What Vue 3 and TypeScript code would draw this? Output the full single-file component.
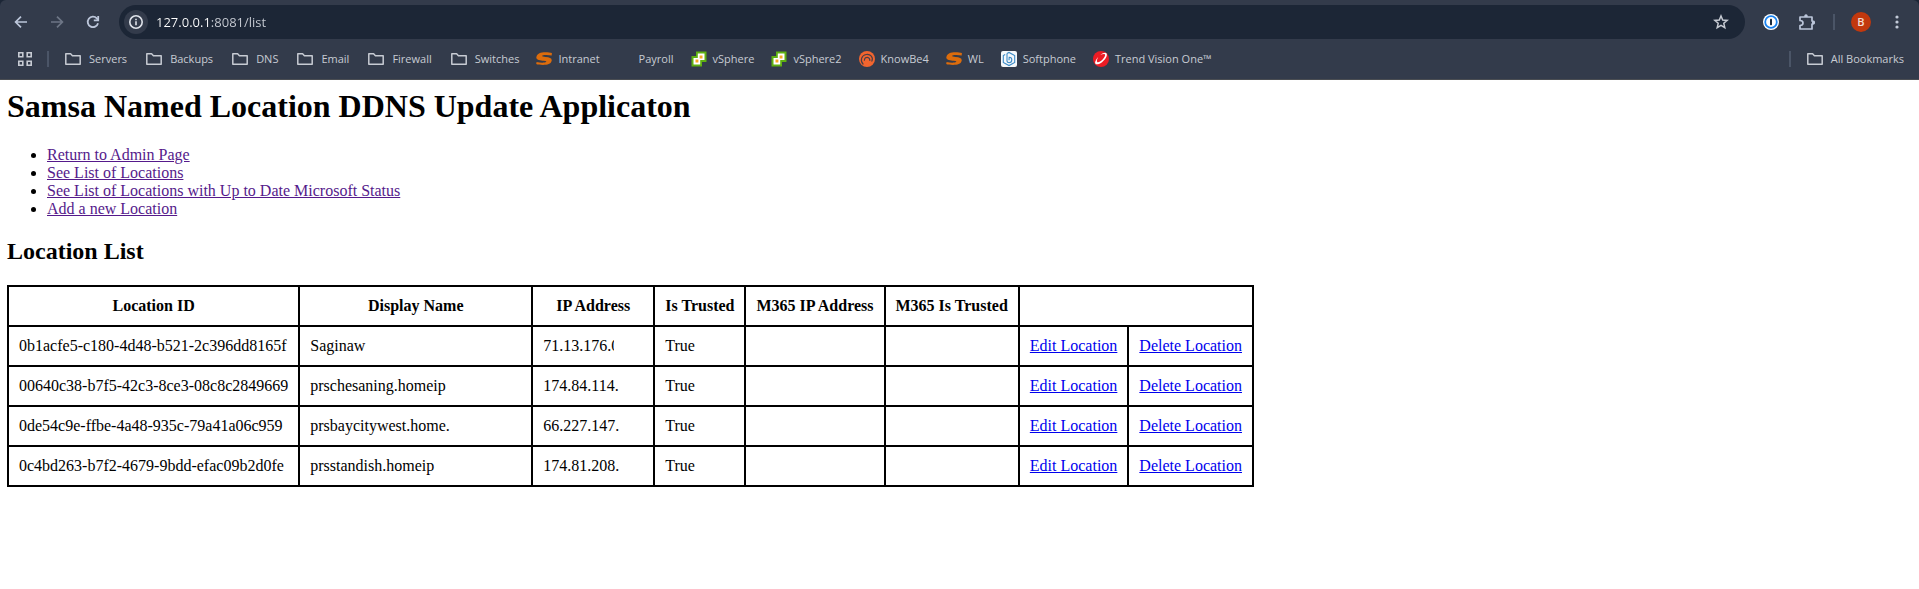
<script setup lang="ts">
import { ref } from 'vue'

type IconKind = 'folder' | 'swoosh' | 'none' | 'vsphere' | 'knowbe4' | 'softphone' | 'trend'

interface Bookmark {
  label: string
  icon: IconKind
}

interface NamedLocation {
  id: string
  displayName: string
  ipAddress: string
  isTrusted: string
}

const address = ref('127.0.0.1:8081/list')

const bookmarks: Bookmark[] = [
  { label: 'Servers', icon: 'folder' },
  { label: 'Backups', icon: 'folder' },
  { label: 'DNS', icon: 'folder' },
  { label: 'Email', icon: 'folder' },
  { label: 'Firewall', icon: 'folder' },
  { label: 'Switches', icon: 'folder' },
  { label: 'Intranet', icon: 'swoosh' },
  { label: 'Payroll', icon: 'none' },
  { label: 'vSphere', icon: 'vsphere' },
  { label: 'vSphere2', icon: 'vsphere' },
  { label: 'KnowBe4', icon: 'knowbe4' },
  { label: 'WL', icon: 'swoosh' },
  { label: 'Softphone', icon: 'softphone' },
  { label: 'Trend Vision One™', icon: 'trend' },
]

const navLinks: string[] = [
  'Return to Admin Page',
  'See List of Locations',
  'See List of Locations with Up to Date Microsoft Status',
  'Add a new Location',
]

const locations: NamedLocation[] = [
  { id: '0b1acfe5-c180-4d48-b521-2c396dd8165f', displayName: 'Saginaw', ipAddress: '71.13.176.0', isTrusted: 'True' },
  { id: '00640c38-b7f5-42c3-8ce3-08c8c2849669', displayName: 'prschesaning.homeip', ipAddress: '174.84.114.', isTrusted: 'True' },
  { id: '0de54c9e-ffbe-4a48-935c-79a41a06c959', displayName: 'prsbaycitywest.home.', ipAddress: '66.227.147.', isTrusted: 'True' },
  { id: '0c4bd263-b7f2-4679-9bdd-efac09b2d0fe', displayName: 'prsstandish.homeip', ipAddress: '174.81.208.', isTrusted: 'True' },
]
</script>

<template>
  <div class="window">
    <header class="chrome">
      <div class="toolbar">
        <button class="tool" type="button" aria-label="Back">
          <svg width="16" height="16" viewBox="0 0 16 16" fill="none" stroke="#bcc6da" stroke-width="1.7"><path d="M14 8H3M8 2.6L2.6 8L8 13.4" /></svg>
        </button>
        <button class="tool" type="button" aria-label="Forward" disabled>
          <svg width="16" height="16" viewBox="0 0 16 16" fill="none" stroke="#6e7686" stroke-width="1.7"><path d="M2 8H13M8 2.6L13.4 8L8 13.4" /></svg>
        </button>
        <button class="tool" type="button" aria-label="Reload">
          <svg width="16" height="16" viewBox="0 0 16 16" fill="none" stroke="#bcc6da" stroke-width="1.8"><path d="M13 9.2A5.2 5.2 0 1 1 11.8 4.4L13.2 6" /><path d="M13.2 2V6.3H8.8" /></svg>
        </button>
        <div class="omnibox">
          <button class="info" type="button" aria-label="View site information">
            <svg width="16" height="16" viewBox="0 0 16 16" fill="none" stroke="#dfe3ea" stroke-width="1.6"><circle cx="8" cy="8" r="6.2" /><path d="M8 7.2V11.3M8 4.7V6.2" /></svg>
          </button>
          <input v-model="address" class="address" type="text" aria-label="Address" />
          <button class="star" type="button" aria-label="Bookmark this page">
            <svg width="16" height="16" viewBox="0 0 16 16" fill="none" stroke="#c7cbd3" stroke-width="1.5"><path d="M8 2L9.7 6L14.2 6.4L10.8 9.3L11.8 13.6L8 11.3L4.2 13.6L5.2 9.3L1.8 6.4L6.3 6Z" /></svg>
          </button>
        </div>
        <button class="tool" type="button" aria-label="1Password">
          <svg width="16" height="16" viewBox="0 0 16 16"><circle cx="8" cy="8" r="8" fill="#fff" /><circle cx="8" cy="8" r="5.8" fill="#fff" stroke="#1a83f0" stroke-width="1.8" /><rect x="7" y="4.8" width="2" height="6.4" rx=".7" fill="#1b2a3c" /></svg>
        </button>
        <button class="tool" type="button" aria-label="Extensions">
          <svg width="18" height="18" viewBox="0 0 18 18"><path d="M2 4H14V8Q16.2 8 16.2 9.5Q16.2 11 14 11V16H2V12.5Q5 12.5 5 10Q5 7.5 2 7.5Z" fill="none" stroke="#bcc6da" stroke-width="1.7" stroke-linejoin="round" /><path d="M6.3 4Q6 1.3 8 1.3Q10 1.3 9.7 4ZM14 8Q17 8 17 9.5Q17 11 14 11Z" fill="#bcc6da" /></svg>
        </button>
        <span class="divider"></span>
        <button class="tool" type="button" aria-label="Profile"><span class="avatar">B</span></button>
        <button class="tool" type="button" aria-label="Menu">
          <svg width="16" height="16" viewBox="0 0 16 16" fill="#c3cad8"><circle cx="8" cy="3" r="1.6" /><circle cx="8" cy="8" r="1.6" /><circle cx="8" cy="13" r="1.6" /></svg>
        </button>
      </div>

      <nav class="bookmarks" aria-label="Bookmarks">
        <button class="apps" type="button" aria-label="Apps">
          <svg width="16" height="16" viewBox="0 0 16 16" fill="none" stroke="#c7cbd3" stroke-width="1.6"><path d="M1.8 1.8H5.8V5.8H1.8ZM10.2 1.8H14.2V5.8H10.2ZM1.8 10.2H5.8V14.2H1.8ZM10.2 10.2H14.2V14.2H10.2Z" /></svg>
        </button>
        <span class="divider"></span>
        <a v-for="bookmark in bookmarks" :key="bookmark.label" class="bookmark" href="#">
          <svg class="icon" :class="{ folder: bookmark.icon === 'folder' }" width="16" height="16" viewBox="0 0 16 16" aria-hidden="true">
            <path v-if="bookmark.icon === 'folder'" d="M.8 13.2V2.8H5.6L7.4 4.7H15.2V13.2Z" fill="none" stroke="#c7cbd3" stroke-width="1.5" stroke-linejoin="round" />
            <path v-else-if="bookmark.icon === 'swoosh'" d="M15.7 4.6C12.6 3.9 8.4 3.8 6.6 4.5C5.2 5.2 6.6 5.8 9.5 6C14 6.2 16.3 7.4 15.6 10.1C14.8 13.1 11.6 14 7 14C4.2 14 1.8 13.7 .2 13.1L.6 10.9C3.8 11.8 8.8 11.9 10 11C11 10.2 9.4 9.9 6.6 9.7C2.4 9.5 -.2 8.5 .4 5.9C1.2 2.5 4.6 1.2 9.4 1.2C12 1.2 14.5 1.5 15.9 2Z" fill="#dc6c0c" />
            <g v-else-if="bookmark.icon === 'vsphere'">
              <path d="M5 .5H15.5V11H11V15.5H.5V5H5Z" fill="#5fb011" />
              <path d="M6.8 2.5H13.5V9H9.2V13.5H2.5V7H6.8Z" fill="#fff" />
              <path d="M8.6 4.5H11.5V7.4H8.6ZM4.5 8.6H7.4V11.5H4.5Z" fill="#f7a823" />
            </g>
            <g v-else-if="bookmark.icon === 'knowbe4'">
              <circle cx="8" cy="8" r="8" fill="#f1652f" />
              <path d="M4 13C1 9.8 2.2 4.3 7.2 3.5C11.6 2.9 14.5 6.3 12.9 10.1M5.4 9.2C5.6 6.8 7.2 6.2 8.4 6.3C10 6.5 11 7.8 10.8 9.4" fill="none" stroke="#493e46" stroke-width="1.2" stroke-linecap="round" />
            </g>
            <g v-else-if="bookmark.icon === 'softphone'">
              <rect width="16" height="16" rx="2" fill="#f6f8fa" />
              <path d="M6 2.4L8 1.4L13.7 4.6V11.4L8 14.6L2.3 11.4V4.6L4.2 3.5M6 2.4V10.2Q6.3 11.8 8 11.8Q10.8 11.8 10.8 8.8Q10.8 6.2 8.2 6.2L8 9.2" fill="none" stroke="#3c8bc7" stroke-width="1.1" />
            </g>
            <g v-else-if="bookmark.icon === 'trend'">
              <circle cx="8" cy="8" r="8" fill="#ec1c24" />
              <path d="M7.4 4C10.3 1.6 13.2 1.2 13.8 2.9C14.7 5.5 10.1 11.3 6 12.9C3.2 14 1.3 13 2.4 10.2C3 8.7 4 7.3 5.2 6.1C4 8.3 3.3 10.6 4.4 11.2C6.5 12.3 11.9 6.8 12.1 4.3C12.3 2.5 9.9 3 7.4 4Z" fill="#fff" />
            </g>
          </svg>
          <span>{{ bookmark.label }}</span>
        </a>
        <span class="divider end"></span>
        <a class="bookmark all" href="#">
          <svg class="icon folder" width="16" height="16" viewBox="0 0 16 16" aria-hidden="true"><path d="M.8 13.2V2.8H5.6L7.4 4.7H15.2V13.2Z" fill="none" stroke="#c7cbd3" stroke-width="1.5" stroke-linejoin="round" /></svg>
          <span>All Bookmarks</span>
        </a>
      </nav>
    </header>

    <main class="page">
      <h1>Samsa Named Location DDNS Update Applicaton</h1>
      <ul>
        <li v-for="link in navLinks" :key="link"><a class="visited" href="#">{{ link }}</a></li>
      </ul>
      <h2>Location List</h2>
      <table>
        <thead>
          <tr>
            <th scope="col">Location ID</th>
            <th scope="col" class="name">Display Name</th>
            <th scope="col" class="ip">IP Address</th>
            <th scope="col">Is Trusted</th>
            <th scope="col">M365 IP Address</th>
            <th scope="col">M365 Is Trusted</th>
            <td colspan="2"></td>
          </tr>
        </thead>
        <tbody>
          <tr v-for="location in locations" :key="location.id">
            <td>{{ location.id }}</td>
            <td>{{ location.displayName }}</td>
            <td><span class="clip">{{ location.ipAddress }}</span></td>
            <td>{{ location.isTrusted }}</td>
            <td></td>
            <td></td>
            <td><a class="action" href="#">Edit Location</a></td>
            <td><a class="action" href="#">Delete Location</a></td>
          </tr>
        </tbody>
      </table>
    </main>
  </div>
</template>

<style>
body {
  margin: 0;
  background: #fff;
}
</style>

<style scoped>
.window {
  background: #1c2636;
}

.chrome {
  box-sizing: border-box;
  height: 80px;
  padding-top: 4px;
  border-bottom: 1px solid #4a4d52;
  border-radius: 6px 6px 0 0;
  background: #333b4b;
  color: #c7cbd3;
  font: 11px/16px "Open Sans", "Noto Sans", sans-serif;
}

button {
  display: flex;
  align-items: center;
  justify-content: center;
  flex: none;
  padding: 0;
  border: 0;
  background: none;
  color: inherit;
  font: inherit;
}

.toolbar {
  display: flex;
  align-items: center;
  height: 36px;
  padding: 0 4px 0 3px;
}

.tool {
  width: 36px;
  height: 34px;
}

.omnibox {
  display: flex;
  align-items: center;
  flex: 1;
  min-width: 0;
  height: 34px;
  margin: 0 8px;
  padding: 0 12px 0 5px;
  box-sizing: border-box;
  border-radius: 17px;
  background: #1c2636;
}

.info {
  width: 24px;
  height: 24px;
  border-radius: 12px;
  background: #333b4b;
}

.address {
  flex: 1;
  min-width: 0;
  margin: 0 8px;
  padding: 0;
  border: 0;
  outline: 0;
  background: linear-gradient(90deg, #fff 53px, #c9cdd5 53px);
  background-clip: text;
  color: transparent;
  font: 13px/20px "Open Sans", "Noto Sans", sans-serif;
}

.star {
  width: 24px;
  height: 24px;
}

.divider {
  flex: none;
  width: 2px;
  height: 16px;
  margin: 0 8px;
  background: #4b5567;
}

.avatar {
  width: 20px;
  height: 20px;
  border-radius: 10px;
  background: #c2380d;
  color: #f3dcd4;
  font-size: 11px;
  font-weight: 600;
  line-height: 20px;
  text-align: center;
}

.bookmarks {
  display: flex;
  align-items: center;
  height: 38px;
  padding: 0 15px 0 17px;
}

.apps {
  width: 16px;
  height: 24px;
}

.bookmarks .divider {
  margin: 0 14px;
}

.bookmark {
  display: flex;
  align-items: center;
  gap: 6px;
  flex: none;
  margin-right: 17px;
  color: inherit;
  text-decoration: none;
  white-space: nowrap;
}

.icon {
  flex: none;
}

.icon.folder {
  margin: 0 2px;
}

.bookmarks .end {
  margin-left: auto;
}

.bookmark.all {
  margin-right: 0;
}

.page {
  padding: 8px 7px;
  background: #fff;
  color: #000;
  font: 16px/18px "Liberation Serif", "Times New Roman", serif;
}

h1 {
  margin: 0 0 21px;
  font-size: 32px;
  line-height: 37px;
}

ul {
  margin: 0 0 20px;
  padding-left: 40px;
}

h2 {
  margin: 0 0 20px;
  font-size: 24px;
  line-height: 27px;
}

.visited {
  color: #551a8b;
}

.action {
  color: #0000ee;
}

table {
  border-collapse: collapse;
}

th,
td {
  padding: 10px;
  border: 2px solid #000;
  white-space: nowrap;
}

.name {
  width: 211px;
}

.ip {
  width: 100px;
}

.clip {
  display: block;
  width: 76px;
  overflow: hidden;
}

tbody tr:first-child .clip {
  width: 71px;
}
</style>
